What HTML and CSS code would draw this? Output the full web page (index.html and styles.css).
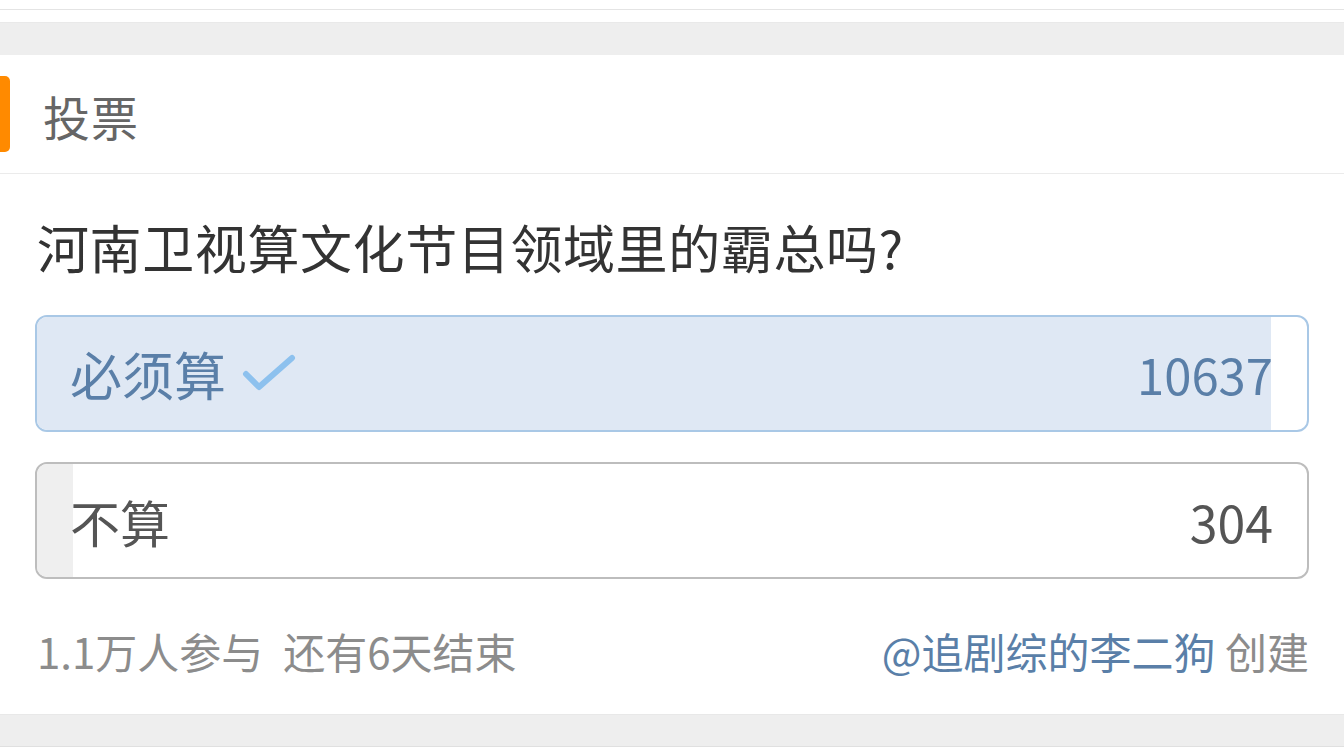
FILE: index.html
```html
<!DOCTYPE html>
<html lang="zh">
<head>
<meta charset="utf-8">
<link rel="stylesheet" href="styles.css">
</head>
<body>
<div class="top-strip"></div>
<div class="band"></div>
<section class="card">
  <header class="card-head">
    <span class="accent"></span>
    <h2 class="title">投票</h2>
  </header>
  <div class="card-body">
    <p class="question">河南卫视算文化节目领域里的霸总吗?</p>
    <div class="option option-picked">
      <div class="fill" style="width:97.2%"></div>
      <span class="label">必须算
        <svg class="check" width="54" height="40" viewBox="0 0 54 40"><path d="M4 20 L17 33 L50 4" fill="none" stroke="#8dc1ee" stroke-width="6" stroke-linecap="round" stroke-linejoin="round"/></svg>
      </span>
      <span class="count">10637</span>
    </div>
    <div class="option">
      <div class="fill" style="width:2.8%"></div>
      <span class="label">不算</span>
      <span class="count">304</span>
    </div>
    <div class="meta">
      <div class="meta-left"><span>1.1万人参与</span><span class="gap">还有6天结束</span></div>
      <div class="meta-right"><span class="author">@追剧综的李二狗</span> 创建</div>
    </div>
  </div>
</section>
<div class="band band-bottom"></div>
<div class="bottom-strip"></div>
</body>
</html>
```

FILE: styles.css
```css
* { box-sizing: border-box; }
html, body { margin: 0; padding: 0; }
body {
  width: 1344px;
  height: 756px;
  overflow: hidden;
  background: #ffffff;
  font-family: "Noto Sans CJK SC", "Noto Sans", sans-serif;
}
.top-strip {
  height: 22px;
  border-top: 9px solid #ffffff;
  box-shadow: inset 0 1px 0 #e4e4e4;
  background: #ffffff;
}
.band {
  height: 33px;
  background: #eeeeee;
  border-top: 1px solid #e9e9e9;
}
.band-bottom {
  height: 33px;
  border-top: 1px solid #e8e8e8;
  border-bottom: 1px solid #e0e0e0;
}
.bottom-strip { height: 10px; background: #ffffff; }
.card { background: #ffffff; }
.card-head {
  height: 119px;
  display: flex;
  align-items: center;
  border-bottom: 1px solid #ebebeb;
}
.accent {
  width: 10px;
  height: 76px;
  background: #ff8a00;
  border-radius: 0 5px 5px 0;
}
.title {
  margin: 0 0 0 33px;
  font-size: 47px;
  font-weight: 400;
  color: #666666;
  line-height: 60px;
  letter-spacing: 1px;
  position: relative;
  top: 2px;
}
.card-body {
  padding: 38px 35px 33px 35px;
}
.question {
  margin: 0 0 33px 2px;
  font-size: 52px;
  letter-spacing: 0.6px;
  line-height: 70px;
  color: #333333;
  height: 70px;
}
.option {
  position: relative;
  height: 117px;
  border: 2px solid #bdbdbd;
  border-radius: 12px;
  overflow: hidden;
  display: flex;
  align-items: center;
  justify-content: space-between;
  padding: 0 34px 0 33px;
  margin-bottom: 30px;
  background: #ffffff;
}
.option .fill {
  position: absolute;
  left: 0;
  top: 0;
  bottom: 0;
  background: #efefef;
}
.option-picked { border-color: #a9c8e6; }
.option-picked .fill { background: #dfe8f4; }
.label, .count {
  position: relative;
  font-size: 50px;
  line-height: 60px;
  color: #555555;
  display: flex;
  align-items: center;
}
.option-picked .label, .option-picked .count { color: #5a7fa8; }
.option-picked .label { font-size: 52px; }
.count { font-size: 50px; }
.option-picked .count { font-size: 49px; }
.check { margin-left: 16px; }
.meta {
  margin-top: 42px;
  display: flex;
  justify-content: space-between;
  align-items: center;
  font-size: 42px;
  line-height: 60px;
  color: #8c8c8c;
  padding-left: 2px;
}
.meta .gap { margin-left: 20px; }
.author { color: #5a7fa8; }
```
